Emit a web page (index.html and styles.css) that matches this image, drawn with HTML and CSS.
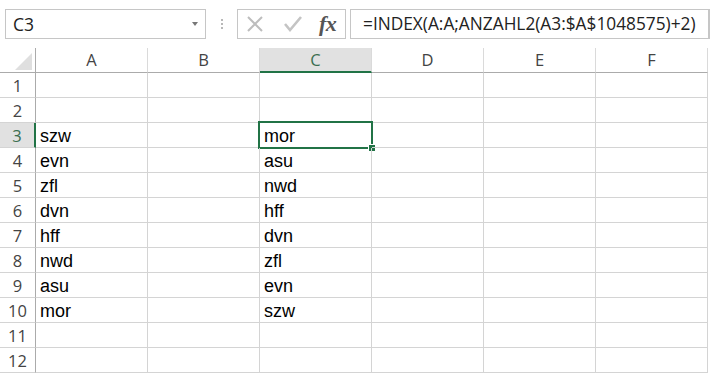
FILE: index.html
```html
<!DOCTYPE html>
<html>
<head>
<meta charset="utf-8">
<link rel="stylesheet" href="styles.css">
</head>
<body>
<div class="bar">
  <div class="namebox"><span class="name">C3</span><span class="arrow"></span></div>
  <div class="grip"><i></i><i></i><i></i></div>
  <div class="fxbox">
    <svg class="ico" width="18" height="16" viewBox="0 0 18 16"><path d="M2 1 L16 15 M16 1 L2 15" stroke="#bdbdbd" stroke-width="2" fill="none"/></svg>
    <svg class="ico" width="20" height="16" viewBox="0 0 20 16"><path d="M2 8 L7 14 L18 1" stroke="#c4c4c4" stroke-width="2.6" fill="none"/></svg>
    <span class="fx">fx</span>
  </div>
  <div class="formula">=INDEX(A:A;ANZAHL2(A3:$A$1048575)+2)</div>
</div>
<div class="sheet">
  <div class="corner"><span class="tri"></span></div>
  <div class="ch">A</div><div class="ch">B</div><div class="ch sel">C</div><div class="ch">D</div><div class="ch">E</div><div class="ch">F</div>

  <div class="rh">1</div><div class="c"></div><div class="c"></div><div class="c"></div><div class="c"></div><div class="c"></div><div class="c"></div>
  <div class="rh">2</div><div class="c"></div><div class="c"></div><div class="c"></div><div class="c"></div><div class="c"></div><div class="c"></div>
  <div class="rh sel">3</div><div class="c">szw</div><div class="c"></div><div class="c active">mor<span class="selbox"><span class="handle"></span></span></div><div class="c"></div><div class="c"></div><div class="c"></div>
  <div class="rh">4</div><div class="c">evn</div><div class="c"></div><div class="c">asu</div><div class="c"></div><div class="c"></div><div class="c"></div>
  <div class="rh">5</div><div class="c">zfl</div><div class="c"></div><div class="c">nwd</div><div class="c"></div><div class="c"></div><div class="c"></div>
  <div class="rh">6</div><div class="c">dvn</div><div class="c"></div><div class="c">hff</div><div class="c"></div><div class="c"></div><div class="c"></div>
  <div class="rh">7</div><div class="c">hff</div><div class="c"></div><div class="c">dvn</div><div class="c"></div><div class="c"></div><div class="c"></div>
  <div class="rh">8</div><div class="c">nwd</div><div class="c"></div><div class="c">zfl</div><div class="c"></div><div class="c"></div><div class="c"></div>
  <div class="rh">9</div><div class="c">asu</div><div class="c"></div><div class="c">evn</div><div class="c"></div><div class="c"></div><div class="c"></div>
  <div class="rh">10</div><div class="c">mor</div><div class="c"></div><div class="c">szw</div><div class="c"></div><div class="c"></div><div class="c"></div>
  <div class="rh">11</div><div class="c"></div><div class="c"></div><div class="c"></div><div class="c"></div><div class="c"></div><div class="c"></div>
  <div class="rh">12</div><div class="c"></div><div class="c"></div><div class="c"></div><div class="c"></div><div class="c"></div><div class="c"></div>
</div>
</body>
</html>
```

FILE: styles.css
```css
html, body { margin: 0; padding: 0; background: #fff; }
body { width: 710px; height: 376px; overflow: hidden; font-family: "Open Sans", "Liberation Sans", sans-serif; }

.bar { display: flex; align-items: center; height: 48px; padding: 0 0 0 5px; box-sizing: border-box; }
.namebox { width: 201px; height: 30px; box-sizing: border-box; border: 1px solid #c6c6c6; display: flex; align-items: center; justify-content: space-between; padding: 0 7px 0 7px; }
.name { font-size: 17.5px; color: #222; }
.arrow { width: 0; height: 0; border-left: 3.5px solid transparent; border-right: 3.5px solid transparent; border-top: 4px solid #777; }
.grip { width: 31px; display: flex; flex-direction: column; align-items: center; gap: 2px; }
.grip i { display: block; width: 2px; height: 2px; background: #b8b8b8; }
.fxbox { width: 109px; height: 30px; box-sizing: border-box; border: 1px solid #c6c6c6; display: flex; align-items: center; padding-left: 8px; gap: 19px; }
.ico { display: block; }
.fx { font-family: "Liberation Serif", "DejaVu Serif", serif; font-style: italic; font-weight: bold; font-size: 22px; color: #555; margin-left: -3px; letter-spacing: -0.5px; line-height: 26px; }
.formula { margin-left: 4px; flex: 1; height: 30px; box-sizing: border-box; border: 1px solid #c6c6c6; border-right-width: 2px; font-size: 17.3px; color: #222; padding-left: 12px; line-height: 27px; white-space: nowrap; }

.sheet { display: grid; grid-template-columns: 36px repeat(6, 112px); grid-template-rows: 25px repeat(12, 25px); }
.corner { border-right: 1px solid #ababab; border-bottom: 1px solid #ababab; position: relative; }
.tri { position: absolute; right: 3px; bottom: 2px; width: 0; height: 0; border-left: 17px solid transparent; border-bottom: 17px solid #dfdfdf; }
.ch { border-right: 1px solid #dadada; border-bottom: 1px solid #ababab; text-align: center; font-size: 16.5px; color: #444; line-height: 24px; }
.ch.sel { background: #e1e1e1; border-bottom: 2px solid #217346; line-height: 23px; color: #3b6e50; }
.rh { border-right: 1px solid #ababab; border-bottom: 1px solid #d4d4d4; text-align: center; font-size: 16.5px; color: #444; line-height: 25px; }
.rh.sel { background: #e1e1e1; color: #3b6e50; border-right: 2px solid #217346; }
.c { border-right: 1px solid #d4d4d4; border-bottom: 1px solid #d4d4d4; font-family: "Liberation Sans", sans-serif; font-size: 18px; color: #000; padding-left: 4px; line-height: 27px; position: relative; }
.selbox { position: absolute; left: -2px; top: -2px; right: -2px; bottom: -2px; border: 2px solid #217346; }
.handle { position: absolute; right: -5px; bottom: -5px; width: 6px; height: 6px; background: #217346; border: 1px solid #fff; }
```
